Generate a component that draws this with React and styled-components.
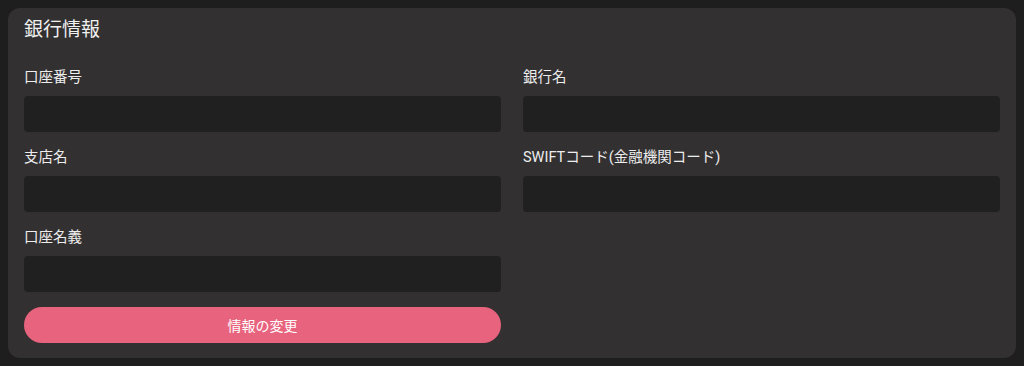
import React from 'react';
import styled, { createGlobalStyle } from 'styled-components';

const GlobalStyle = createGlobalStyle`
  html, body {
    margin: 0;
    background: #1e1e1e;
  }
  body {
    padding: 8px;
    font-family: Roboto, "Noto Sans CJK JP", sans-serif;
    color: #ececec;
  }
  * { box-sizing: border-box; }
`;

const Card = styled.section`
  width: 1008px;
  height: 350px;
  background: #323031;
  border-radius: 12px;
  padding: 9px 16px 15px;
  display: flex;
  flex-direction: column;
`;

const Title = styled.h2`
  margin: 0 0 25px;
  font-size: 19px;
  line-height: 26px;
  font-weight: 400;
  color: #f0f0f0;
`;

const Grid = styled.div`
  display: grid;
  grid-template-columns: 477px 477px;
  column-gap: 22px;
  row-gap: 16px;
`;

const Field = styled.label`
  display: flex;
  flex-direction: column;
  gap: 8px;
`;

const Label = styled.span`
  font-size: 14.5px;
  line-height: 20px;
  font-weight: 400;
  color: #ededed;
`;

const Input = styled.input`
  height: 36px;
  border: none;
  border-radius: 4px;
  background: #202020;
  color: #eee;
  padding: 0 10px;
  font: inherit;
  outline: none;
`;

const Button = styled.button`
  margin-top: -1px;
  height: 36px;
  border: none;
  border-radius: 18px;
  background: #e8637d;
  color: #fff;
  font-family: Roboto, "Noto Sans CJK JP", sans-serif;
  font-size: 14px;
  cursor: pointer;
`;

const fields = [
  '口座番号',
  '銀行名',
  '支店名',
  'SWIFTコード(金融機関コード)',
  '口座名義',
];

export default function App() {
  return (
    <>
      <GlobalStyle />
      <Card>
        <Title>銀行情報</Title>
        <Grid>
          {fields.map((f) => (
            <Field key={f}>
              <Label>{f}</Label>
              <Input />
            </Field>
          ))}
          <div />
          <Button>情報の変更</Button>
        </Grid>
      </Card>
    </>
  );
}
